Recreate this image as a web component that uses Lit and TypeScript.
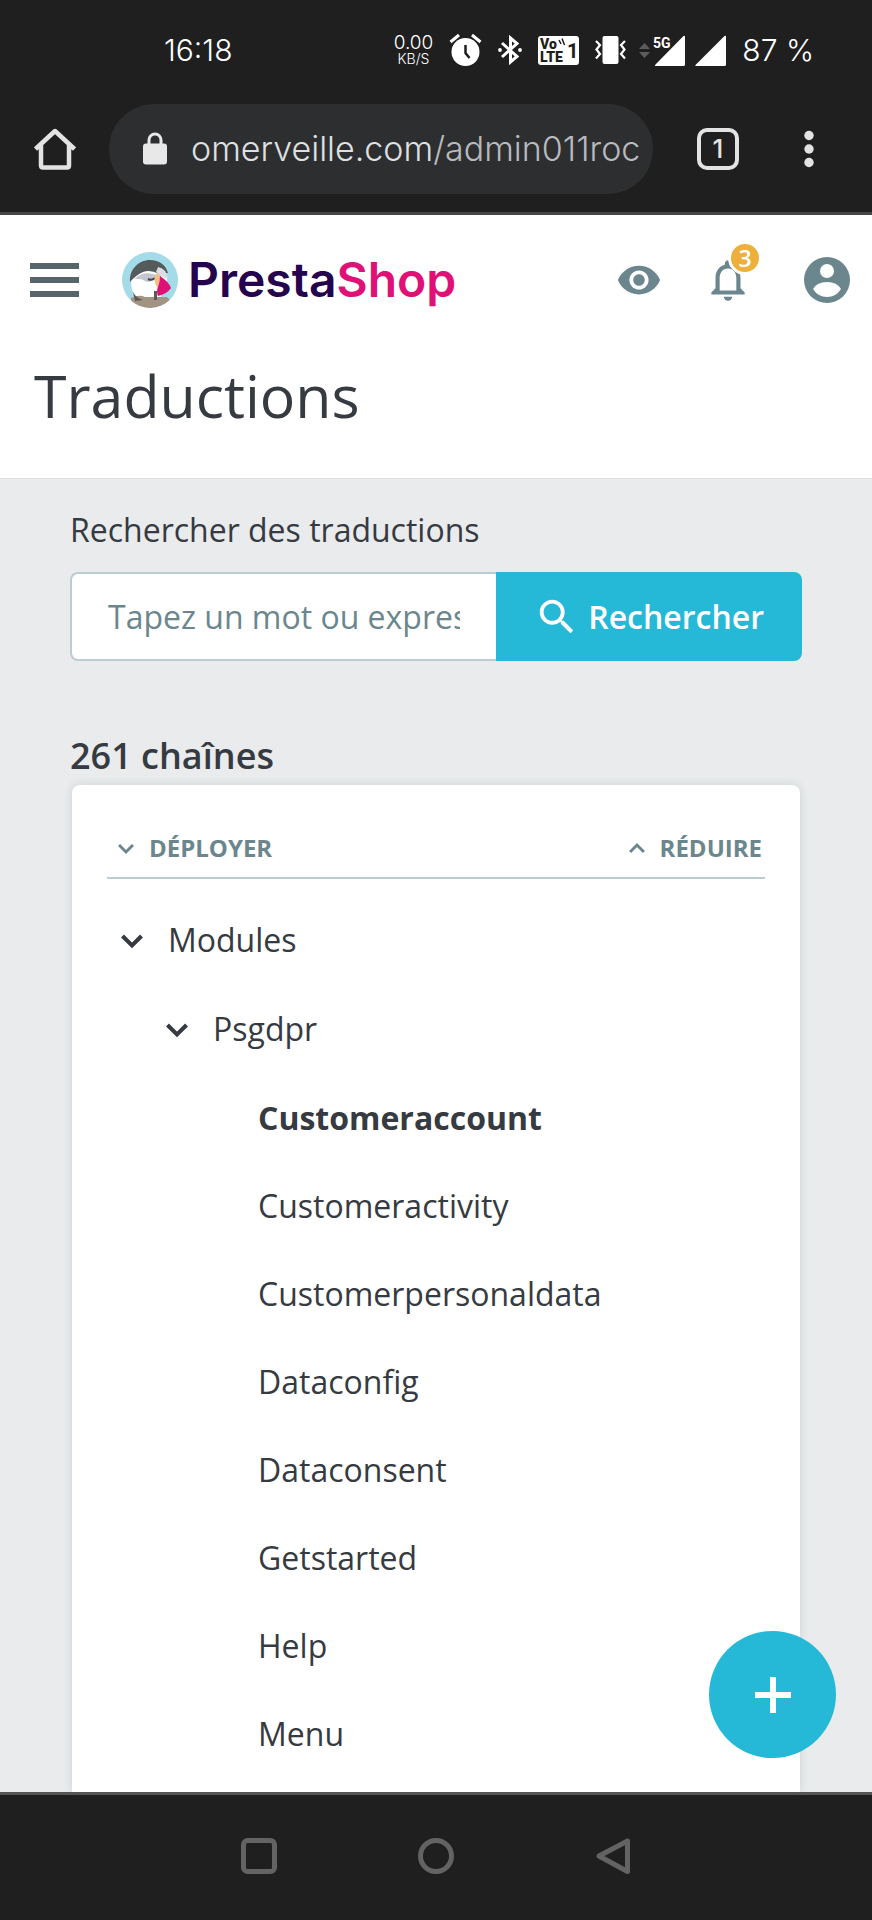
import { LitElement, html, css, svg } from "lit";
import { customElement, property, state } from "lit/decorators.js";
import { classMap } from "lit/directives/class-map.js";

@customElement("status-bar")
class StatusBar extends LitElement {
  static styles = css`
    :host {
      display: flex;
      align-items: center;
      justify-content: space-between;
      height: 100px;
      padding: 0 58px 0 164px;
      box-sizing: border-box;
      color: #fff;
      font: 300 30px/32px Inter, "Liberation Sans", sans-serif;
    }
    svg { display: block; fill: #fff; }
    .tray { display: flex; align-items: center; gap: 16px; }
    .cells { display: flex; gap: 10px; margin-left: -3px; }
    .rate { display: flex; flex-direction: column; align-items: center; font-size: 19px; line-height: 18px; }
    .rate small { font-size: 14px; line-height: 14px; }
    .stroke { fill: none; stroke: #fff; stroke-width: 3; }
    .dark { fill: #1f1f1f; font: 900 14px Roboto, sans-serif; }
    .one { font-size: 20px; font-weight: 700; }
    .gen { font: 700 14px Roboto, sans-serif; }
    .cut { stroke: #1f1f1f; stroke-width: 3; paint-order: stroke; }
    .idle { fill: #5c5c5c; }
  `;
  render() {
    return html`
      <time>16:18</time>
      <div class="tray">
        <div class="rate"><span>0.00</span><small>KB/S</small></div>
        <svg width="33" height="34" viewBox="0 0 33 34" role="img" aria-label="Alarme">
          <circle cx="16.5" cy="19" r="14" />
          <path class="stroke" d="M1.5 9 10 2M31.5 9 23 2" />
          <path d="M16.5 12v8l4 5" fill="none" stroke="#1f1f1f" stroke-width="2.5" />
        </svg>
        <svg width="24" height="30" viewBox="0 0 24 30" role="img" aria-label="Bluetooth">
          <path d="M4 8 19 21.500 12.500 27V3L19 8.500 4 22" fill="none" stroke="#fff" stroke-width="3" />
          <circle cx="2" cy="15" r="1.900" /><circle cx="22" cy="15" r="1.900" />
        </svg>
        <svg width="41" height="30" viewBox="0 0 41 30" role="img" aria-label="VoLTE 1">
          <rect y="1" width="41" height="29" rx="3" />
          <text class="dark" x="2" y="14">Vo</text>
          <text class="dark" x="2" y="27">LTE</text>
          <text class="dark one" x="29" y="23">1</text>
          <path d="M21 5 23 9M24 3.500 26.500 10" stroke="#1f1f1f" stroke-width="1.500" />
        </svg>
        <svg width="31" height="28" viewBox="0 0 31 28" role="img" aria-label="Vibreur">
          <rect x="7.500" width="16" height="28" rx="2" />
          <path d="M1 5l4 4-3.500 4.500L5 18l-4 4.500M30 5l-4 4 3.500 4.500L26 18l4 4.500" fill="none" stroke="#fff" stroke-width="2.200" />
        </svg>
        <div class="cells">
          <svg width="46" height="33" viewBox="0 0 46 33" role="img" aria-label="Signal 5G">
            <path class="idle" d="M0 15 5.500 9 11 15zM0 18H11L5.500 24z" />
            <path d="M44.500 2Q46 1 46 3V30.500Q46 32 44.500 32H17Q15 32 16.500 30.500z" />
            <text class="gen cut" x="14" y="14">5G</text>
          </svg>
          <svg width="31" height="33" viewBox="0 0 31 33" role="img" aria-label="Signal">
            <path d="M29.500 2Q31 1 31 3V30.500Q31 32 29.500 32H1Q-.5 32 1 30.500z" />
          </svg>
        </div>
        <span>87 %</span>
      </div>
    `;
  }
}

@customElement("browser-bar")
class BrowserBar extends LitElement {
  static styles = css`
    :host {
      display: flex;
      align-items: center;
      height: 115px;
      padding: 0 42px 15px 34px;
      box-sizing: border-box;
      border-bottom: 3px solid #474747;
    }
    button { display: flex; padding: 0; border: 0; background: none; color: #e3e3e3; }
    svg { display: block; }
    .address {
      flex: 1;
      min-width: 0;
      display: flex;
      align-items: center;
      gap: 24px;
      height: 90px;
      margin: 0 44px 0 33px;
      padding: 0 10px 0 34px;
      box-sizing: border-box;
      border-radius: 45px;
      background: #2d2e30;
    }
    .url {
      overflow: hidden;
      white-space: nowrap;
      color: #b8babd;
      font: 300 34px/48px Inter, "Liberation Sans", sans-serif;
    }
    .host { color: #dfe0e1; }
    .tabs {
      justify-content: center;
      width: 42px;
      height: 42px;
      margin-right: 49px;
      box-sizing: border-box;
      border: 4px solid #e3e3e3;
      border-radius: 10px;
      font: 500 26px/34px Inter, sans-serif;
    }
  `;
  render() {
    return html`
      <button aria-label="Accueil">
        <svg width="42" height="42" viewBox="0 0 42 42" fill="none" stroke="currentColor" stroke-width="4.500" stroke-linejoin="round">
          <path d="M1.500 21 21 3 40.500 21M7 17V37.500Q7 39.500 9 39.500H33Q35 39.500 35 37.500V17" />
        </svg>
      </button>
      <div class="address">
        <svg width="24" height="33" viewBox="0 0 24 33" fill="#e8e8e8" role="img" aria-label="Connexion sécurisée">
          <rect y="11.500" width="24" height="21" rx="3" />
          <path d="M6 13V8a6 6 0 0 1 12 0v5" fill="none" stroke="#e8e8e8" stroke-width="3" />
        </svg>
        <span class="url"><span class="host">omerveille.com</span>/admin011roc</span>
      </div>
      <button class="tabs" aria-label="1 onglet">1</button>
      <button aria-label="Menu">
        <svg width="42" height="42" viewBox="0 0 42 42" fill="currentColor">
          <circle cx="21" cy="7.500" r="4.700" /><circle cx="21" cy="21" r="4.700" /><circle cx="21" cy="34.500" r="4.700" />
        </svg>
      </button>
    `;
  }
}

@customElement("shop-header")
class ShopHeader extends LitElement {
  static styles = css`
    :host { display: block; background: #fff; border-bottom: 1px solid #dcdedf; }
    svg { display: block; }
    .row { display: flex; align-items: center; height: 129px; padding: 0 22px 0 30px; }
    button { position: relative; display: flex; padding: 0; border: 0; background: none; color: #6c868e; }
    .burger { color: #576469; }
    .logo {
      display: flex;
      align-items: center;
      gap: 10px;
      margin: 0 auto 0 43px;
      color: #25034d;
      text-decoration: none;
      font: 600 48px/56px Inter, sans-serif;
    }
    .pink { color: #df1176; }
    .actions { display: flex; align-items: center; gap: 41px; }
    .account { margin-left: 10px; }
    .badge {
      position: absolute;
      top: -14px;
      right: -9px;
      width: 28px;
      height: 28px;
      border: 3px solid #fff;
      border-radius: 50%;
      background: #eeb03c;
      color: #fff;
      font: 600 23px/28px "Open Sans", sans-serif;
    }
    h1 {
      margin: 0;
      padding: 11px 34px 43px;
      color: #363a41;
      font: 400 59px/80px "Open Sans", sans-serif;
    }
  `;
  render() {
    return html`
      <div class="row">
        <button class="burger" aria-label="Menu">
          <svg width="49" height="34" viewBox="0 0 49 34" fill="currentColor">
            <path d="M0 0H49V6H0zM0 14H49V20H0zM0 28H49V34H0z" />
          </svg>
        </button>
        <a class="logo" href="#">
          <svg width="56" height="56" viewBox="0 0 56 56" aria-hidden="true">
            <clipPath id="disc"><circle cx="28" cy="28" r="28" /></clipPath>
            <g clip-path="url(#disc)">
              <rect width="56" height="56" fill="#a4dbe8" />
              <path d="M9 29C9 18 18 12 28 12s17 8 17 17l-8 20H16C12 44 9 38 9 29z" fill="#fff" />
              <path d="M8 30C7 17 17 8 28 8c9 0 16 5 18 13l-9 1q-9-5-16-2-7 3-13 10z" fill="#535b5b" />
              <path d="M12 27q10-9 22-4-2 7-9 7-6-4-13-3z" fill="#c3c6ce" />
              <path d="M36 15q8 1 10 12l-7-3-5-4z" fill="#dadde3" />
              <path d="M26 27q4 2 7-1" fill="none" stroke="#43464a" stroke-width="2" />
              <path d="M33 23q3-3 6 1l-2 13q-6-5-4-14z" fill="#f3c08a" />
              <path d="M38 24q9 6 11 12-4 6-13 8-2-5 0-9 2-5 2-11z" fill="#df1176" />
              <path d="M9 46q8-4 14-1h22l3 3v8H9z" fill="#a39382" />
              <path d="M11 40q3 6 10 8l-8 1zM32 39h3v9h-3z" fill="#5b5856" />
            </g>
          </svg>
          <span>Presta<span class="pink">Shop</span></span>
        </a>
        <div class="actions">
          <button aria-label="Voir la boutique">
            <svg width="46" height="46" viewBox="0 0 24 24" fill="currentColor">
              <path d="M12 4.500C7 4.500 2.730 7.610 1 12c1.730 4.390 6 7.500 11 7.500s9.270-3.110 11-7.500c-1.730-4.390-6-7.500-11-7.500zM12 17c-2.760 0-5-2.240-5-5s2.240-5 5-5 5 2.240 5 5-2.240 5-5 5zm0-8c-1.660 0-3 1.340-3 3s1.340 3 3 3 3-1.340 3-3-1.340-3-3-3z" />
            </svg>
          </button>
          <button aria-label="3 notifications">
            <svg width="50" height="50" viewBox="0 0 24 24" fill="currentColor">
              <path d="M12 22c1.100 0 2-.9 2-2h-4c0 1.100.9 2 2 2zm6-6v-5c0-3.070-1.640-5.640-4.500-6.320V4c0-.83-.67-1.500-1.500-1.500s-1.500.67-1.500 1.500v.68C7.630 5.360 6 7.920 6 11v5l-2 2v1h16v-1l-2-2zm-2 1H8v-6c0-2.480 1.510-4.500 4-4.500s4 2.020 4 4.500v6z" />
            </svg>
            <span class="badge">3</span>
          </button>
          <button class="account" aria-label="Compte">
            <svg width="46" height="46" viewBox="0 0 46 46">
              <circle cx="23" cy="23" r="23" fill="currentColor" />
              <circle cx="23" cy="14" r="7" fill="#fff" />
              <path d="M9 32Q13 25 23 25t14 7q-5 8-14 8T9 32z" fill="#fff" />
            </svg>
          </button>
        </div>
      </div>
      <h1>Traductions</h1>
    `;
  }
}

interface Branch {
  label: string;
  current?: boolean;
  children?: Branch[];
}

const chevron = (size: number, up = false) => html`
  <svg width=${size} height=${size} viewBox="0 0 24 24" fill="none" stroke="currentColor" stroke-width="2.200" aria-hidden="true">
    ${up ? svg`<path d="M6.800 15 12 9.800 17.200 15" />` : svg`<path d="M6.800 9.800 12 15 17.200 9.800" />`}
  </svg>
`;

@customElement("translation-tree")
class TranslationTree extends LitElement {
  @property({ attribute: false }) branches: Branch[] = [];
  @state() private open = true;

  static styles = css`
    :host {
      flex: 1;
      display: block;
      margin: 0 2px;
      padding: 35px;
      padding-bottom: 0;
      border-radius: 8px 8px 0 0;
      background: #fff;
      box-shadow: 0 0 8px rgba(90, 120, 130, 0.2);
      color: #363a41;
      font: 400 32px/88px "Open Sans", sans-serif;
    }
    svg { display: block; }
    button {
      display: flex;
      align-items: center;
      padding: 0;
      border: 0;
      background: none;
      color: inherit;
      font: inherit;
    }
    .tools { display: flex; justify-content: space-between; padding: 0 3px 2px; border-bottom: 2px solid #bbcdd2; }
    .tools button { gap: 7px; color: #6c868e; font-size: 24px; font-weight: 700; line-height: 55px; }
    ul { margin: 0; padding: 0; list-style: none; }
    .root { padding-top: 17px; }
    .nested { padding: 1px 0 0 45px; }
    .branch { gap: 14px; padding-left: 3px; }
    .leaf { display: block; padding-left: 61px; color: inherit; text-decoration: none; }
    .current { font-weight: 700; }
  `;

  private renderBranch(branch: Branch): unknown {
    if (!branch.children) {
      return html`<li><a href="#" class=${classMap({ leaf: true, current: !!branch.current })}>${branch.label}</a></li>`;
    }
    return html`
      <li>
        <button class="branch" @click=${() => (this.open = !this.open)}>${chevron(44)}${branch.label}</button>
        ${this.open ? html`<ul class="nested">${branch.children.map((child) => this.renderBranch(child))}</ul>` : null}
      </li>
    `;
  }

  render() {
    return html`
      <div class="tools">
        <button @click=${() => (this.open = true)}>${chevron(32)}DÉPLOYER</button>
        <button @click=${() => (this.open = false)}>${chevron(32, true)}RÉDUIRE</button>
      </div>
      <ul class="root">${this.branches.map((branch) => this.renderBranch(branch))}</ul>
    `;
  }
}

@customElement("app-root")
class AppRoot extends LitElement {
  private branches: Branch[] = [
    {
      label: "Modules",
      children: [
        {
          label: "Psgdpr",
          children: [
            { label: "Customeraccount", current: true },
            { label: "Customeractivity" },
            { label: "Customerpersonaldata" },
            { label: "Dataconfig" },
            { label: "Dataconsent" },
            { label: "Getstarted" },
            { label: "Help" },
            { label: "Menu" },
          ],
        },
      ],
    },
  ];

  static styles = css`
    :host {
      position: relative;
      display: flex;
      flex-direction: column;
      min-height: 100vh;
      background: #1f1f1f;
      color: #363a41;
      font: 400 32px/44px "Open Sans", sans-serif;
    }
    svg { display: block; }
    main {
      flex: 1;
      display: flex;
      flex-direction: column;
      padding: 29px 70px 0;
      background: #e9ebec;
    }
    .search { display: grid; grid-template-columns: minmax(0, 1fr) auto; row-gap: 20px; }
    label { grid-column: 1 / -1; }
    input {
      min-width: 0;
      height: 89px;
      padding: 0 36px;
      box-sizing: border-box;
      border: 2px solid #bbcdd2;
      border-right: 0;
      border-radius: 8px 0 0 8px;
      background: #fff;
      color: inherit;
      font: inherit;
    }
    input::placeholder { color: #6c868e; opacity: 1; }
    button { border: 0; background: #25b9d7; color: #fff; font: inherit; }
    .submit {
      display: flex;
      align-items: center;
      gap: 8px;
      padding: 0 38px;
      border-radius: 0 8px 8px 0;
      font-weight: 600;
    }
    h2 { margin: 71px 0 5px; font-size: 36px; font-weight: 600; line-height: 48px; }
    .add {
      position: absolute;
      right: 36px;
      bottom: 162px;
      display: grid;
      place-items: center;
      width: 127px;
      height: 127px;
      padding: 0;
      border-radius: 50%;
    }
    nav {
      display: flex;
      align-items: center;
      justify-content: center;
      gap: 141px;
      height: 121px;
      padding-bottom: 4px;
      border-top: 3px solid #555;
    }
    nav button { padding: 0; background: none; color: #636363; }
  `;

  render() {
    return html`
      <status-bar></status-bar>
      <browser-bar></browser-bar>
      <shop-header></shop-header>
      <main>
        <form class="search" @submit=${(e: Event) => e.preventDefault()}>
          <label for="query">Rechercher des traductions</label>
          <input id="query" type="text" placeholder="Tapez un mot ou expression..." />
          <button class="submit">
            <svg width="46" height="46" viewBox="0 0 24 24" fill="currentColor" aria-hidden="true">
              <path d="M15.500 14h-.79l-.28-.27C15.410 12.590 16 11.110 16 9.500 16 5.910 13.090 3 9.500 3S3 5.910 3 9.500 5.910 16 9.500 16c1.610 0 3.090-.59 4.230-1.570l.27.28v.79l5 4.990L20.490 19l-4.990-5zm-6 0C7.010 14 5 11.990 5 9.500S7.010 5 9.500 5 14 7.010 14 9.500 11.990 14 9.500 14z" />
            </svg>
            Rechercher
          </button>
        </form>
        <h2>261 chaînes</h2>
        <translation-tree .branches=${this.branches}></translation-tree>
      </main>
      <button class="add" aria-label="Ajouter">
        <svg width="36" height="36" viewBox="0 0 36 36" fill="currentColor"><path d="M15 0h6v15h15v6H21v15h-6V21H0v-6h15z" /></svg>
      </button>
      <nav>
        <button aria-label="Applications récentes">
          <svg width="36" height="36" viewBox="0 0 36 36" fill="none" stroke="currentColor" stroke-width="5">
            <rect x="2.500" y="2.500" width="31" height="31" rx="4" />
          </svg>
        </button>
        <button aria-label="Accueil">
          <svg width="36" height="36" viewBox="0 0 36 36" fill="none" stroke="currentColor" stroke-width="5">
            <circle cx="18" cy="18" r="15.500" />
          </svg>
        </button>
        <button aria-label="Retour">
          <svg width="36" height="36" viewBox="0 0 36 36" fill="none" stroke="currentColor" stroke-width="5" stroke-linejoin="round">
            <path d="M32.500 3V33.500L4 18z" />
          </svg>
        </button>
      </nav>
    `;
  }
}
